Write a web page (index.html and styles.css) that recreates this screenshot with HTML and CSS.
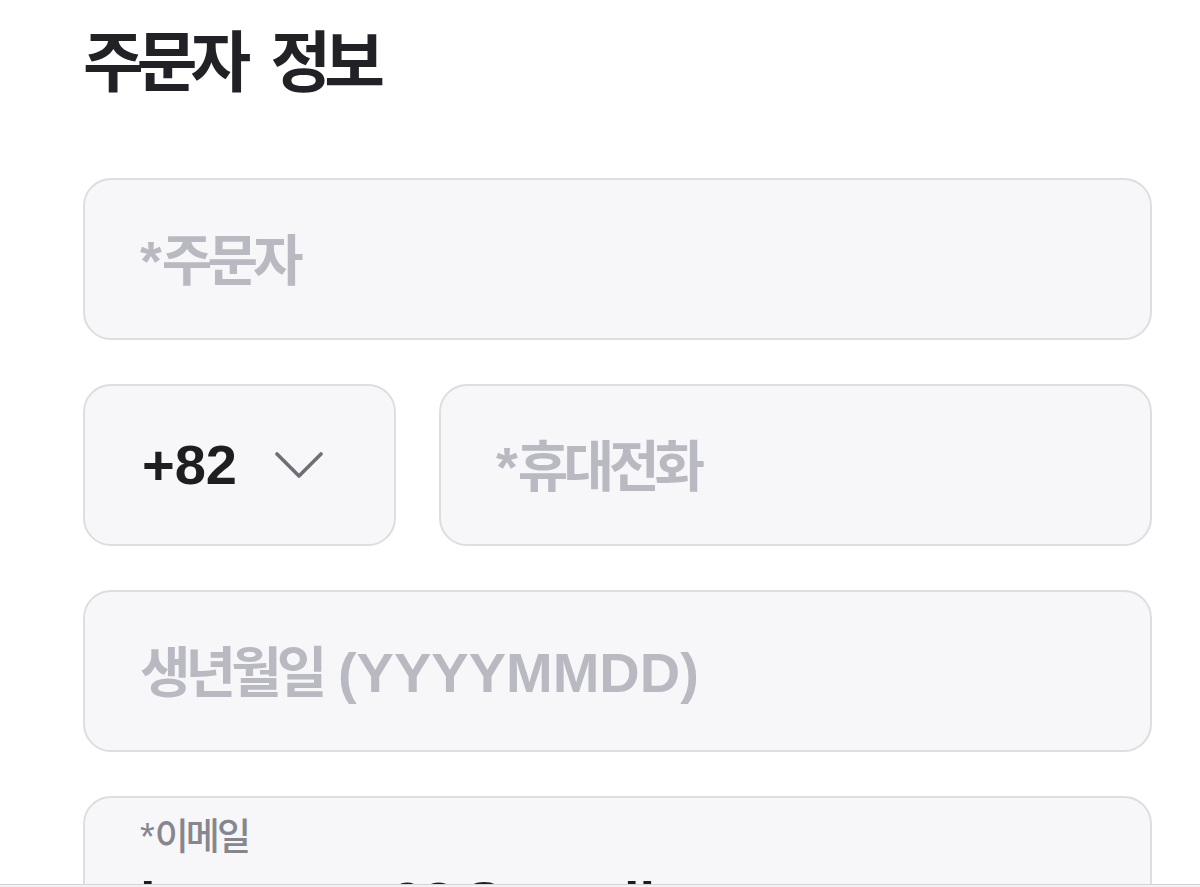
FILE: index.html
```html
<!DOCTYPE html>
<html lang="ko">
<head>
  <meta charset="UTF-8">
  <meta name="viewport" content="width=device-width, initial-scale=1.0">
  <title>주문자 정보</title>
  <link rel="stylesheet" href="styles.css">
</head>
<body>

  <!-- Orderer Section -->
  <section class="orderer">
    <h1 class="title"><span class="ko">주문자</span> <span class="ko">정보</span></h1>

    <div class="form">
      <div class="field">
        <span class="placeholder">*<span class="ko">주문자</span></span>
      </div>

      <div class="row">
        <div class="field select">
          <span class="value">+82</span>
          <svg class="chevron" width="48" height="28" viewBox="0 0 48 28">
            <path d="M2 3 L24 25 L46 3" fill="none" stroke="#6f6f78" stroke-width="3.6" stroke-linecap="round" stroke-linejoin="round"/>
          </svg>
        </div>
        <div class="field grow">
          <span class="placeholder">*<span class="ko">휴대전화</span></span>
        </div>
      </div>

      <div class="field">
        <span class="placeholder"><span class="ko">생년월일</span> (YYYYMMDD)</span>
      </div>

      <div class="field stacked">
        <span class="label">*<span class="ko">이메일</span></span>
        <span class="value">junyoung98@gmail.com</span>
      </div>
    </div>
  </section>

  <div class="bottom-bar"></div>

</body>
</html>
```

FILE: styles.css
```css
body {
  margin: 0;
  padding: 0;
  background: #fff;
  font-family: 'Liberation Sans', 'Noto Sans CJK KR', sans-serif;
  color: #1e1e22;
  overflow: hidden;
}

.ko {
  font-family: 'Noto Sans CJK KR', sans-serif;
}

/* Orderer Section */
.orderer {
  padding: 17px 48px 0 83px;
}

.title {
  margin: 0;
  font-size: 66px;
  line-height: 80px;
  font-weight: 700;
  color: #222226;
  word-spacing: 8px;
}

.title .ko {
  letter-spacing: -7px;
}

.form {
  display: flex;
  flex-direction: column;
  gap: 44px;
  margin-top: 75px;
}

.row {
  display: flex;
  gap: 43px;
}

.field {
  box-sizing: border-box;
  height: 162px;
  display: flex;
  align-items: center;
  padding: 0 55px;
  background-color: #f7f7fa;
  border: 2px solid #dddde2;
  border-radius: 28px;
}

.grow {
  flex: 1;
}

.placeholder {
  font-size: 56px;
  font-weight: 600;
  color: #b9b9c1;
  line-height: 1;
}

.placeholder .ko {
  font-size: 55px;
  letter-spacing: -5px;
}

/* Country code select */
.select {
  width: 313px;
  padding-left: 57px;
}

.value {
  font-size: 56px;
  font-weight: 600;
  line-height: 1;
  color: #1e1e22;
}

.chevron {
  margin-left: 38px;
}

/* Email field with a floating label */
.stacked {
  flex-direction: column;
  align-items: flex-start;
  justify-content: flex-start;
  padding-top: 14px;
}

.label {
  font-size: 38px;
  font-weight: 500;
  color: #86868e;
  line-height: 44px;
}

.label .ko {
  font-size: 37px;
  letter-spacing: -3px;
}

.stacked .value {
  margin-top: 11px;
  line-height: 64px;
}

.bottom-bar {
  position: fixed;
  left: 0;
  right: 0;
  bottom: 0;
  height: 2px;
  background: #f2f2f4;
  border-top: 1px solid #d4d4d8;
}
```
